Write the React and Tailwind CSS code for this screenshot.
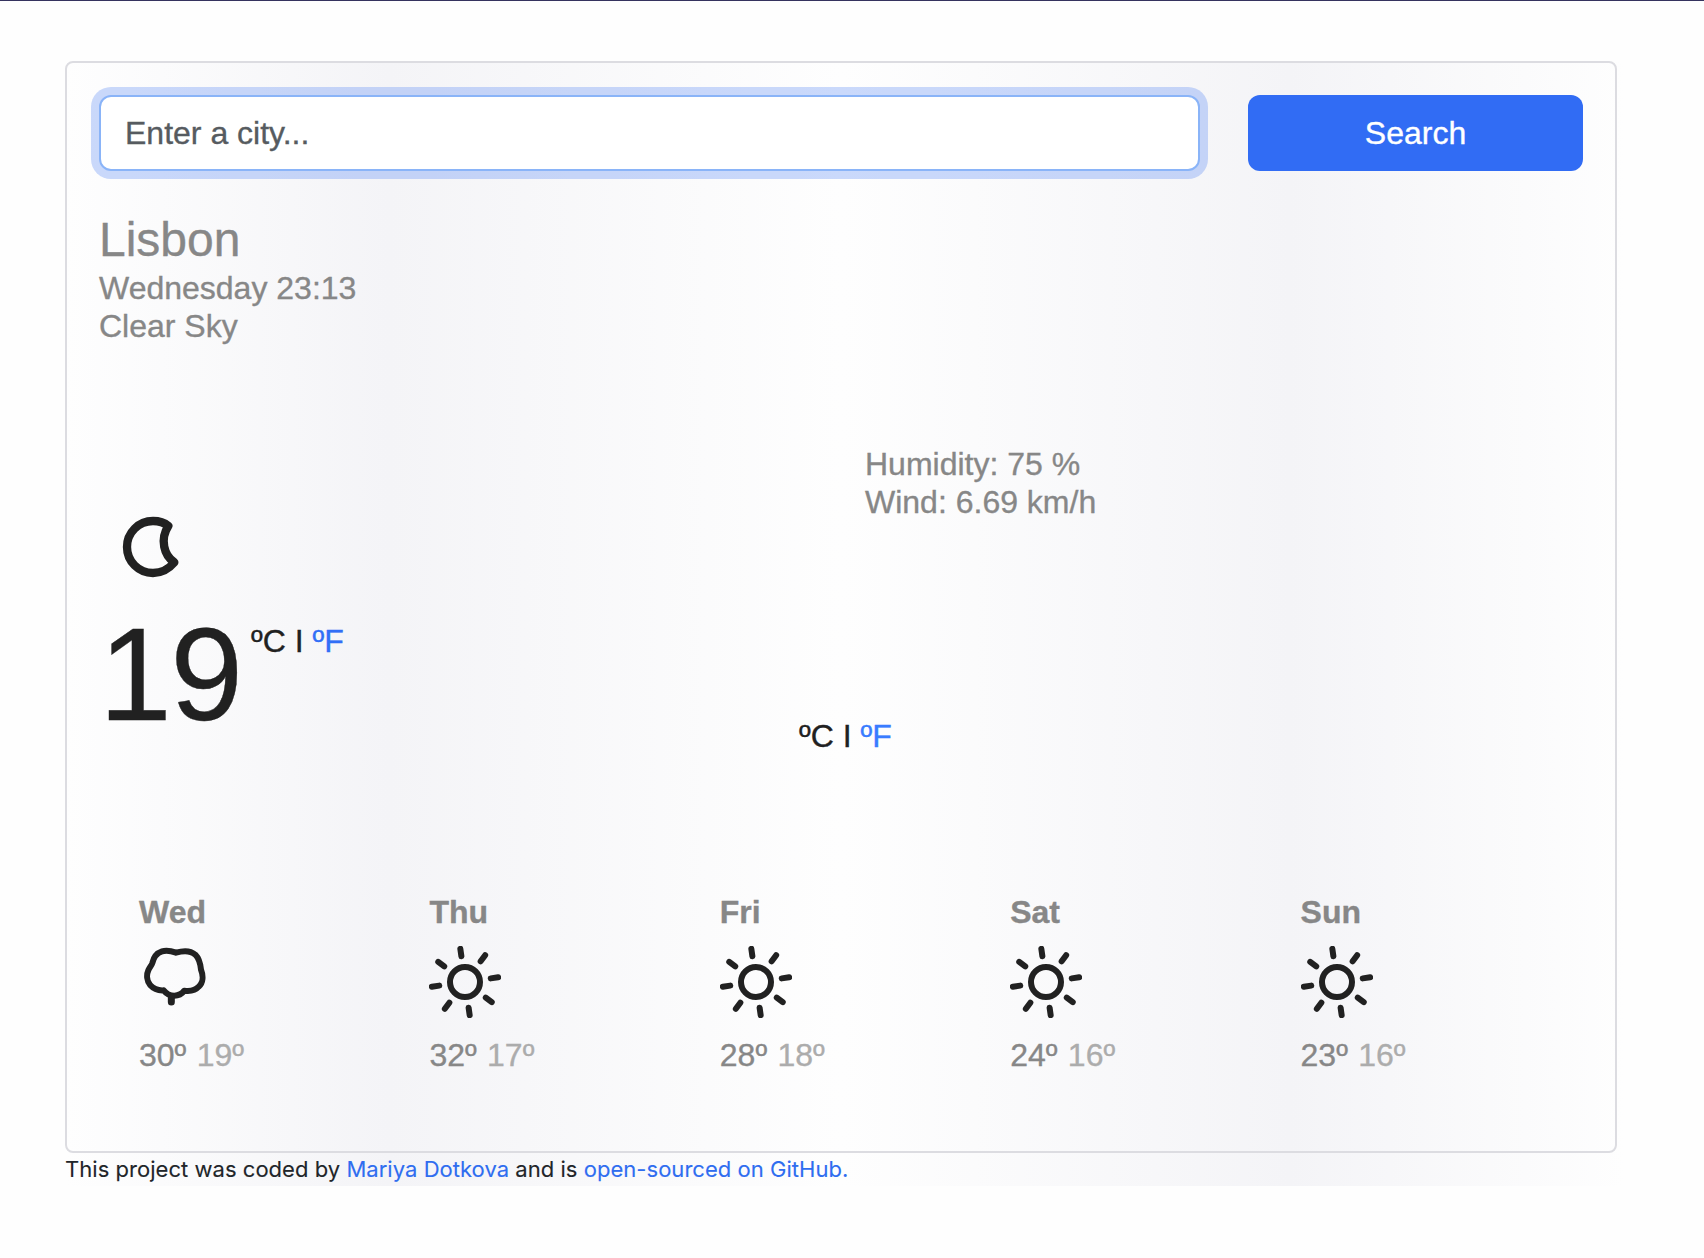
import React from "react";

const days = [
  { name: "Wed", icon: "cloud", high: "30º", low: "19º" },
  { name: "Thu", icon: "sun", high: "32º", low: "17º" },
  { name: "Fri", icon: "sun", high: "28º", low: "18º" },
  { name: "Sat", icon: "sun", high: "24º", low: "16º" },
  { name: "Sun", icon: "sun", high: "23º", low: "16º" },
];

function Sun() {
  const rays = [-8, 37, 82, 127, 172, 217, 262, 307];
  return (
    <svg viewBox="0 0 72 72" className="block h-[72px] w-[72px]" fill="none" stroke="#212121">
      <circle cx="36" cy="36" r="15" strokeWidth="6" />
      {rays.map((a) => (
        <path key={a} d="M36 10V2.5" strokeWidth="6" strokeLinecap="round" transform={`rotate(${a} 36 36)`} />
      ))}
    </svg>
  );
}

function Cloud() {
  return (
    <svg viewBox="27 33 216 216" className="block h-[72px] w-[72px]" fill="none" stroke="#212121" strokeLinejoin="round" strokeLinecap="round">
      <path
        strokeWidth="18"
        d="M138 53C122 47 108 45 96 49C78 55 70 70 67 84C65 91 59 97 55 106C49 120 50 138 61 151C72 163 86 167 101 166C108 175 119 182 133 182C147 182 157 175 163 167C180 169 196 167 206 155C220 143 220 122 213 104C211 84 207 70 196 59C180 45 158 47 138 53Z"
      />
      <path strokeWidth="21" d="M124 186V201" />
    </svg>
  );
}

function Moon() {
  return (
    <svg viewBox="0 0 270 270" className="block h-[90px] w-[90px]" fill="none" stroke="#212121" strokeLinejoin="round">
      <path strokeWidth="25" d="M175 63C162 52 147 48 129 48A78 78 0 0 0 129 204C155 204 177 191 193 172C162 152 149 103 175 63Z" />
    </svg>
  );
}

function Units({ linkClass }) {
  return (
    <span className="whitespace-pre text-[32px] leading-[38px] text-[#212121]">
      ºC I <a className={linkClass}>ºF</a>
    </span>
  );
}

export default function App() {
  return (
    <div className="h-[1258px] w-[1704px] overflow-hidden border-t border-[#35335f] bg-[#fefefe] pt-[60px] font-['Liberation_Sans',Arial,sans-serif] [-webkit-text-stroke:0.35px]">
      <div className="ml-[41px] mr-[63px] h-[1125px] bg-[linear-gradient(90deg,#fefefe_1.5%,#f4f4f7_21.8%,#fefefe_50%,#f4f4f7_78%,#fefefe_99%)] px-6">
        <main className="flex h-[1092px] w-[1552px] flex-col rounded-lg border-2 border-[#dcdce1] px-8 pt-8">
          <form className="flex gap-12" onSubmit={(e) => e.preventDefault()}>
            <input
              className="h-[76px] w-[1101px] rounded-xl border-2 border-[#8ab4f8] bg-white px-6 text-[32px] text-[#212529] outline-none ring-8 ring-[#316cf4]/25 placeholder:text-[#565b60]"
              placeholder="Enter a city..."
            />
            <button className="h-[76px] w-[335px] rounded-xl bg-[#316cf4] text-[32px] text-white">Search</button>
          </form>

          <header className="mt-[40px] text-[32px] leading-[38px] text-[#878787]">
            <h1 className="text-[48px] leading-[58px]">Lisbon</h1>
            <p>Wednesday 23:13</p>
            <p>Clear Sky</p>
          </header>

          <section className="mt-[100px] flex h-[360px] items-start">
            <div className="w-[700px] pt-[60px]">
              <div className="ml-[11px]">
                <Moon />
              </div>
              <div className="mt-[16px] flex items-start">
                <span className="h-[128px] w-[152px] text-[131px] leading-[128px] tracking-[-1.5px] text-[#212121]">19</span>
                <span className="pt-[11px]">
                  <Units linkClass="text-[#316ff6]" />
                </span>
              </div>
            </div>
            <div>
              <ul className="ml-[66px] text-[32px] leading-[38px] text-[#878787]">
                <li>Humidity: 75 %</li>
                <li>Wind: 6.69 km/h</li>
              </ul>
              <div className="mt-[196px]">
                <Units linkClass="text-[#397cff]" />
              </div>
            </div>
          </section>

          <section className="ml-[40px] mt-[88px] grid grid-cols-[repeat(5,290.4px)] text-[32px] leading-[38px]">
            {days.map((d) => (
              <div key={d.name}>
                <h2 className="font-bold text-[#878787]">{d.name}</h2>
                <div className="mt-[15px] mb-[18px]">{d.icon === "sun" ? <Sun /> : <Cloud />}</div>
                <p className="text-[#878787]">
                  {d.high} <span className="ml-[1.5px] text-[#acacac]">{d.low}</span>
                </p>
              </div>
            ))}
          </section>
        </main>
        <footer className="whitespace-nowrap font-['Inter',sans-serif] text-[22px] leading-[33px] tracking-[0.035px] text-[#212529] [-webkit-text-stroke:0.1px]">
          This project was coded by <a className="text-[#2f6df0]">Mariya Dotkova</a> and is{" "}
          <a className="text-[#2f6df0]">open-sourced on GitHub.</a>
        </footer>
      </div>
    </div>
  );
}
